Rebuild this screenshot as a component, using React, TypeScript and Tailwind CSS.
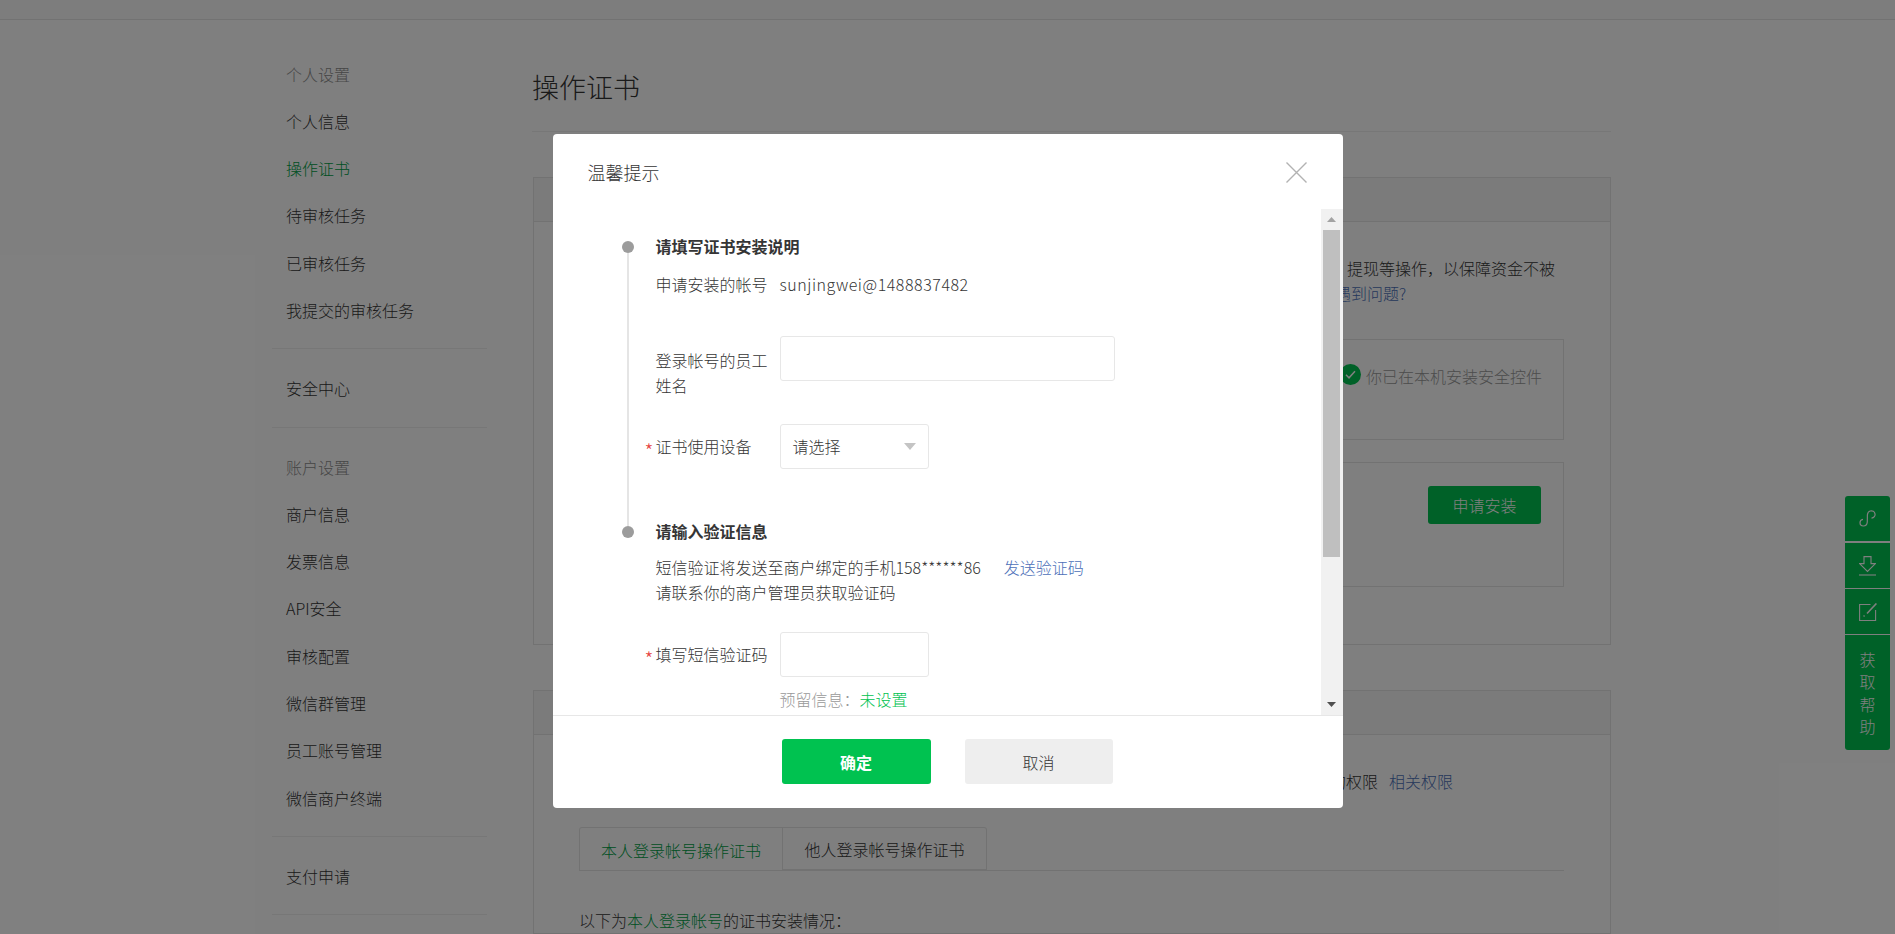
import type { ReactNode } from 'react'

const fontStack = '[font-family:"Noto_Sans_CJK_SC","Noto_Sans",sans-serif]'

const menuGroups = [
  { title: '个人设置', items: ['个人信息', '操作证书', '待审核任务', '已审核任务', '我提交的审核任务'] },
  { items: ['安全中心'] },
  { title: '账户设置', items: ['商户信息', '发票信息', 'API安全', '审核配置', '微信群管理', '员工账号管理', '微信商户终端'] },
  { items: ['支付申请'] },
]

function Sidebar() {
  return (
    <aside className="ml-[272px] w-[215px] pt-[15.5px] shrink-0">
      {menuGroups.map((group, i) => (
        <div key={i} className={`border-b border-[#eeeeee] pb-[14px] ${i > 0 ? 'pt-[16px]' : 'pt-[15px]'}`}>
          {group.title && <div className="pl-[14px] leading-[47.3px] text-[#8d8d8d]">{group.title}</div>}
          {group.items.map((item) => (
            <div
              key={item}
              className={`pl-[14px] leading-[47.3px] ${item === '操作证书' ? 'text-[#00a045]' : 'text-[#353535]'}`}
            >
              {item}
            </div>
          ))}
        </div>
      ))}
    </aside>
  )
}

function Card({ children, className }: { children: ReactNode; className?: string }) {
  return (
    <section className={`ml-[1px] border border-[#e5e5e5] ${className ?? ''}`}>
      <div className="h-[44px] bg-[#f6f6f6] border-b border-[#e5e5e5]" />
      {children}
    </section>
  )
}

function MainContent() {
  return (
    <main className="ml-[45px] w-[1079px] shrink-0">
      <h1 className="h-[112px] pt-[46px] border-b border-[#eeeeee] text-[27px] leading-[42px] text-[#353535]">操作证书</h1>

      <Card className="mt-[45px] h-[468px]">
        <p className="pt-[34px] pl-[813px] leading-[25px] text-[#353535]">提现等操作，以保障资金不被</p>
        <p className="pl-[801px] leading-[25px] text-[#4c6fb8]">遇到问题?</p>
        <div className="ml-[46px] mr-[46px] mt-[33px] h-[101px] border border-[#e5e5e5] flex justify-end items-start pt-[24px] pr-[21px]">
          <span className="mr-[5px] flex h-[21px] w-[21px] items-center justify-center rounded-full bg-[#00c250]">
            <svg width="13" height="13" viewBox="0 0 13 13" fill="none" stroke="white" strokeWidth="1.5">
              <path d="M2 6.8l3 3L11 3.2" />
            </svg>
          </span>
          <span className="leading-[24px] text-[#999999]">你已在本机安装安全控件</span>
        </div>
        <div className="ml-[46px] mr-[46px] mt-[22px] h-[125px] border border-[#e5e5e5] flex justify-end items-start pt-[23px] pr-[22px]">
          <button className="h-[38px] w-[113px] rounded-[3px] bg-[#00c250] text-white">申请安装</button>
        </div>
      </Card>

      <Card className="mt-[45px]">
        <p className="pt-[34px] pl-[796px] leading-[25px] text-[#353535]">
          的权限<span className="ml-[11px] text-[#4c6fb8]">相关权限</span>
        </p>
        <div className="ml-[45px] mr-[46px] mt-[33px] flex h-[44px] border-b border-[#e5e5e5]">
          <div className="h-[44px] w-[204px] rounded-tl-[3px] border border-b-0 border-[#e5e5e5] text-center leading-[44px] text-[#00a045]">
            本人登录帐号操作证书
          </div>
          <div className="w-[204px] rounded-tr-[3px] border border-l-0 border-[#e5e5e5] text-center leading-[42px] text-[#353535]">
            他人登录帐号操作证书
          </div>
        </div>
        <p className="ml-[45px] mt-[37px] leading-[25px] text-[#353535]">
          以下为<span className="text-[#00a045]">本人登录帐号</span>的证书安装情况：
        </p>
      </Card>
    </main>
  )
}

function HelpDock() {
  const cell = 'flex w-[45px] items-center justify-center bg-[#00c250]'
  return (
    <div className="absolute left-[1845px] top-[496px] flex flex-col text-white">
      <div className={`${cell} h-[45px] rounded-t-[3px]`}>
        <svg width="17" height="17" viewBox="0 0 17 17" fill="none" stroke="currentColor" strokeWidth="1.2">
          <path d="M12.5 8.2C15 7.9 16.4 6 16 3.8 15.6 1.6 13.4.4 11.2 1 9.4 1.5 8.6 3 8.4 4.8L8.3 12c-.2 2.4-1.8 4-4 4C2.4 16 1 14.6 1 12.8c0-1.8 1.2-3.2 3-3.4" />
        </svg>
      </div>
      <div className={`${cell} mt-[2px] h-[45px]`}>
        <svg width="17" height="20" viewBox="0 0 17 20" fill="none" stroke="currentColor" strokeWidth="1.1">
          <path d="M5 .6h7v7h4.4L8.5 15.4.6 7.6H5z" />
          <path d="M0 19h17" />
        </svg>
      </div>
      <div className={`${cell} mt-[1px] h-[45px]`}>
        <svg width="18" height="18" viewBox="0 0 18 18" fill="none" stroke="currentColor" strokeWidth="1.1">
          <path d="M11.5 1.5H.6v16h16V7" />
          <path d="M17.4.5L8 10.5" strokeWidth="1.6" />
          <path d="M5.5 12.6l-.9.9" strokeWidth="1.4" />
        </svg>
      </div>
      <div className={`${cell} mt-[1px] h-[115px] rounded-b-[3px] text-center leading-[22.5px]`}>
        <span className="w-[16px]">获取帮助</span>
      </div>
    </div>
  )
}

function FieldLabel({ children, required }: { children: ReactNode; required?: boolean }) {
  return (
    <div className="w-[124px] shrink-0 leading-[25px] text-[#353535]">
      {required && (
        <span className="-ml-[11px] inline-block w-[11px] align-[-6px] text-[20px] leading-[0] text-[#e64340]">*</span>
      )}
      {children}
    </div>
  )
}

function TimelineDot({ line }: { line?: boolean }) {
  return (
    <div className="ml-[69px] mr-[22px] flex w-[12px] shrink-0 flex-col items-center pt-[6px]">
      <span className="h-[12px] w-[12px] rounded-full bg-[#9c9c9c]" />
      {line && <span className="-mb-[6px] w-[2px] flex-1 bg-[#e5e5e5]" />}
    </div>
  )
}

function ModalForm() {
  const boxClass = 'rounded-[3px] border border-[#e7e7e7]'
  return (
    <div className="min-w-0 flex-1 overflow-hidden pt-[26px] text-[#353535]">
      <div className="flex h-[285px]">
        <TimelineDot line />
        <div>
          <h3 className="-mt-[1px] font-bold leading-[24px]">请填写证书安装说明</h3>
          <div className="mt-[14px] flex">
            <FieldLabel>申请安装的帐号</FieldLabel>
            <span className="leading-[25px] tracking-[0.55px]">sunjingwei@1488837482</span>
          </div>
          <div className="mt-[39px] flex">
            <div className="pt-[12px]">
              <FieldLabel>登录帐号的员工姓名</FieldLabel>
            </div>
            <div className={`${boxClass} h-[45px] w-[335px]`} />
          </div>
          <div className="mt-[26px] flex items-center">
            <FieldLabel required>证书使用设备</FieldLabel>
            <div className={`${boxClass} flex h-[45px] w-[149px] items-center justify-between pl-[12px] pr-[12px]`}>
              <span className="-mt-[1px]">请选择</span>
              <svg width="12" height="7" viewBox="0 0 12 7" fill="#c4c4c4">
                <path d="M0 0h12L6 7z" />
              </svg>
            </div>
          </div>
        </div>
      </div>

      <div className="flex">
        <TimelineDot />
        <div>
          <h3 className="-mt-[1px] font-bold leading-[24px]">请输入验证信息</h3>
          <p className="mt-[12px] leading-[25px]">
            短信验证将发送至商户绑定的手机158******86
            <span className="ml-[23px] text-[#4c6fb8]">发送验证码</span>
          </p>
          <p className="leading-[25px]">请联系你的商户管理员获取验证码</p>
          <div className="mt-[27px] flex items-center">
            <FieldLabel required>填写短信验证码</FieldLabel>
            <div className={`${boxClass} h-[45px] w-[149px]`} />
          </div>
          <p className="ml-[124px] mt-[10px] leading-[25px] text-[#999999]">
            预留信息：<span className="text-[#00c250]">未设置</span>
          </p>
        </div>
      </div>
    </div>
  )
}

function ScrollTrack() {
  return (
    <div className="flex w-[22px] shrink-0 flex-col bg-[#f1f1f1]">
      <div className="flex h-[21px] items-center justify-center">
        <svg width="9" height="5" viewBox="0 0 9 5" fill="#a3a3a3">
          <path d="M4.5 0L9 5H0z" />
        </svg>
      </div>
      <div className="ml-[2px] h-[327px] w-[17px] bg-[#bfbfbf]" />
      <div className="flex-1" />
      <div className="flex h-[21px] items-center justify-center">
        <svg width="9" height="5" viewBox="0 0 9 5" fill="#505050">
          <path d="M0 0h9L4.5 5z" />
        </svg>
      </div>
    </div>
  )
}

function CertModal() {
  return (
    <div className="absolute inset-0 flex justify-center bg-black/50 pt-[134px]">
      <div className="h-[674px] w-[790px] overflow-hidden rounded-[4px] bg-white">
        <div className="flex h-[75px] items-center justify-between pl-[35px] pr-[36px] pt-[2px]">
          <h2 className="text-[18px] text-[#353535]">温馨提示</h2>
          <svg width="21" height="21" viewBox="0 0 21 21" fill="none" stroke="#b2b2b2" strokeWidth="1.4">
            <path d="M.5.5l20 20M20.5.5l-20 20" />
          </svg>
        </div>
        <div className="flex h-[506px]">
          <ModalForm />
          <ScrollTrack />
        </div>
        <div className="flex h-[93px] justify-center gap-[34px] border-t border-[#e7e7e7] pt-[23px] pr-[1px]">
          <button className="h-[45px] w-[149px] rounded-[3px] bg-[#00c250] font-bold text-white">确定</button>
          <button className="h-[45px] w-[148px] rounded-[3px] bg-[#eeeeee] text-[#353535]">取消</button>
        </div>
      </div>
    </div>
  )
}

export default function App() {
  return (
    <div className={`relative h-[934px] w-[1895px] overflow-hidden bg-white text-[16px] font-light ${fontStack}`}>
      <div className="h-[20px] border-b border-[#e5e5e5] bg-[#fafafa]" />
      <div className="flex">
        <Sidebar />
        <MainContent />
      </div>
      <HelpDock />
      <CertModal />
    </div>
  )
}
